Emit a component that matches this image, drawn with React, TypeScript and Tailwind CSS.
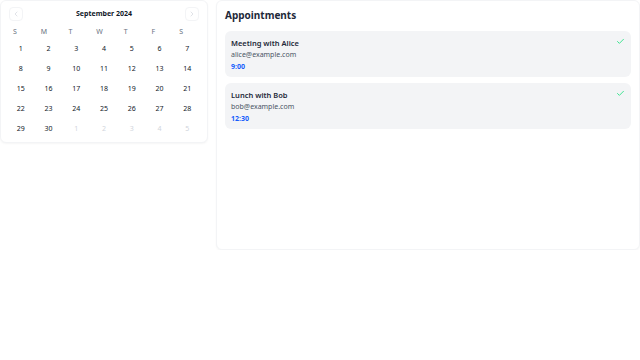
import { ChevronLeft, ChevronRight, Check } from 'lucide-react';

interface Appointment {
  title: string;
  email: string;
  time: string;
}

const appointments: Appointment[] = [
  { title: 'Meeting with Alice', email: 'alice@example.com', time: '9:00' },
  { title: 'Lunch with Bob', email: 'bob@example.com', time: '12:30' },
];

const weekDays = ['S', 'M', 'T', 'W', 'T', 'F', 'S'];

// September 2024 starts on a Sunday, 30 days, padded with Oct 1-5
const days: { day: number; current: boolean }[] = [
  ...Array.from({ length: 30 }, (_, i) => ({ day: i + 1, current: true })),
  ...Array.from({ length: 5 }, (_, i) => ({ day: i + 1, current: false })),
];

const Calendar = () => {
  return (
    <div className="w-[208px] shrink-0 rounded-md border border-gray-100 bg-white px-[6px] pt-[6px] pb-[3px] shadow-[0_1px_2px_rgba(0,0,0,0.04)]">
      <div className="flex h-[14px] items-center justify-between px-[2px]">
        <button className="flex h-[14px] w-[14px] items-center justify-center rounded border border-gray-100 text-gray-300">
          <ChevronLeft className="h-[8px] w-[8px]" strokeWidth={2} />
        </button>
        <span className="text-[7px] font-bold text-gray-900">September 2024</span>
        <button className="flex h-[14px] w-[14px] items-center justify-center rounded border border-gray-100 text-gray-300">
          <ChevronRight className="h-[8px] w-[8px]" strokeWidth={2} />
        </button>
      </div>
      <div className="mt-[4px] grid grid-cols-7">
        {weekDays.map((d, i) => (
          <div key={i} className="flex h-[14px] items-center pl-[6px] text-[7px] text-gray-500">
            {d}
          </div>
        ))}
      </div>
      <div className="grid grid-cols-7">
        {days.map((d, i) => (
          <div
            key={i}
            className={`flex h-[20px] items-center justify-center text-[7px] ${
              d.current ? 'text-gray-900' : 'text-gray-300'
            }`}
          >
            {d.day}
          </div>
        ))}
      </div>
    </div>
  );
};

const AppointmentList = () => {
  return (
    <div className="h-[250px] flex-1 rounded-md border border-gray-100 bg-white px-[8px] pt-[7px] shadow-[0_1px_2px_rgba(0,0,0,0.04)]">
      <h2 className="mb-[9px] h-[14px] text-[10px] leading-[14px] font-bold text-gray-800">Appointments</h2>
      <div className="flex flex-col gap-[6px]">
        {appointments.map((a) => (
          <div key={a.title} className="relative rounded-md bg-gray-100 px-[6px] pt-[6px] pb-[4px]">
            <div className="text-[7.5px] leading-[12px] font-semibold text-gray-800">{a.title}</div>
            <div className="text-[7px] leading-[12px] text-gray-600">{a.email}</div>
            <div className="text-[7px] leading-[12px] font-bold text-blue-600">{a.time}</div>
            <Check className="absolute top-[6px] right-[6px] h-[9px] w-[9px] text-green-400" strokeWidth={2} />
          </div>
        ))}
      </div>
    </div>
  );
};

export default function App() {
  return (
    <div className="flex w-[640px] items-start gap-[8px] bg-white" style={{ fontFamily: '"Noto Sans", sans-serif' }}>
      <Calendar />
      <AppointmentList />
    </div>
  );
}
